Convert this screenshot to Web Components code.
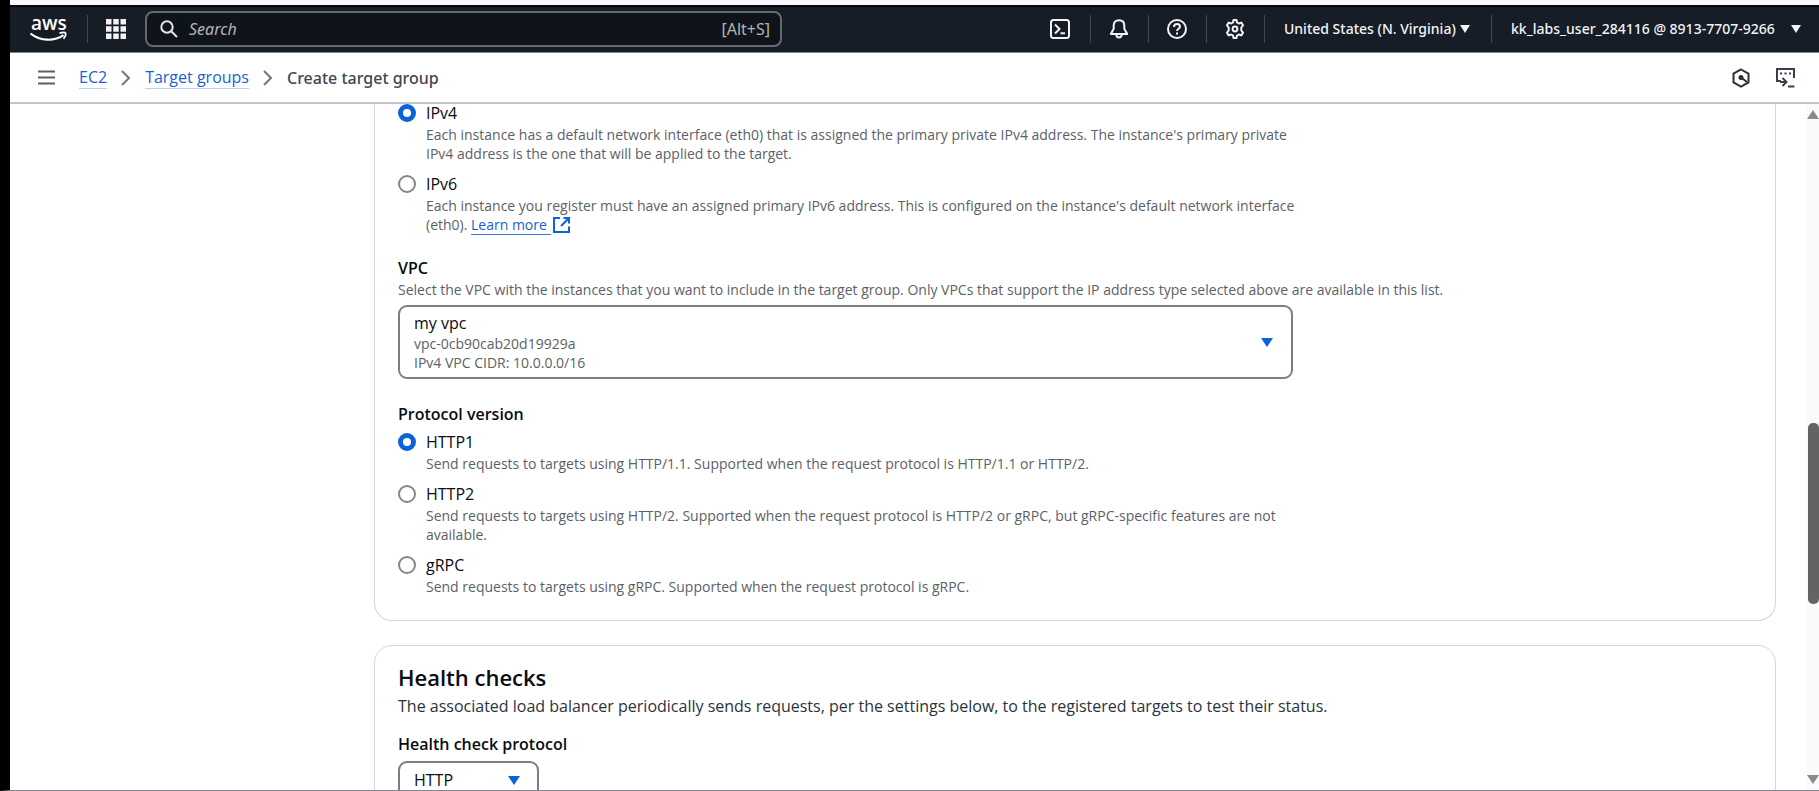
<!DOCTYPE html>
<html lang="en">
<head>
<meta charset="utf-8">
<title>Create target group | EC2</title>
<style>
  html, body { margin: 0; height: 100%; }
  body { font-family: "Open Sans", "Noto Sans", sans-serif; font-size: 16px; line-height: 24px; color: #0a0d12; background: #fff; overflow: hidden; }
</style>
</head>
<body>
<app-shell>
  <console-nav slot="nav"></console-nav>
  <crumb-bar slot="crumbs"></crumb-bar>
  <form-card class="first">
    <radio-group name="ip-type">
      <radio-option label="IPv4" checked>Each instance has a default network interface (eth0) that is assigned the primary private IPv4 address. The instance's primary private IPv4 address is the one that will be applied to the target.</radio-option>
      <radio-option label="IPv6">Each instance you register must have an assigned primary IPv6 address. This is configured on the instance's default network interface (eth0). <external-link href="#ipv6">Learn more</external-link></radio-option>
    </radio-group>
    <vpc-field></vpc-field>
    <radio-group name="protocol-version" heading="Protocol version">
      <radio-option label="HTTP1" checked>Send requests to targets using HTTP/1.1. Supported when the request protocol is HTTP/1.1 or HTTP/2.</radio-option>
      <radio-option label="HTTP2">Send requests to targets using HTTP/2. Supported when the request protocol is HTTP/2 or gRPC, but gRPC-specific features are not available.</radio-option>
      <radio-option label="gRPC">Send requests to targets using gRPC. Supported when the request protocol is gRPC.</radio-option>
    </radio-group>
  </form-card>
  <form-card heading="Health checks" description="The associated load balancer periodically sends requests, per the settings below, to the registered targets to test their status.">
    <protocol-field></protocol-field>
  </form-card>
  <scroll-rail slot="rail"></scroll-rail>
</app-shell>

<script>
const define = (name, html, setup) => {
  const t = document.createElement('template');
  t.innerHTML = html;
  customElements.define(name, class extends HTMLElement {
    connectedCallback() {
      if (this.shadowRoot) return;
      this.attachShadow({ mode: 'open' }).append(t.content.cloneNode(true));
      if (setup) setup(this, this.shadowRoot);
    }
  });
};

define('app-shell', `
<style>
  :host { display: flex; flex-direction: column; height: 100vh; box-sizing: border-box; border-left: 10px solid #000; border-bottom: 1px solid #85858b; }
  .strip { flex: none; height: 5px; background: #fbf5fd; }
  .body { flex: 1; min-height: 0; display: flex; }
  main { flex: 1; min-width: 0; overflow: hidden; display: flex; flex-direction: column; gap: 24px; padding: 0 31px 0 364px; }
  ::slotted(form-card) { flex: none; }
</style>
<div class="strip"></div>
<slot name="nav"></slot>
<slot name="crumbs"></slot>
<div class="body"><main><slot></slot></main><slot name="rail"></slot></div>`);

define('console-nav', `
<style>
  :host { display: block; color: #f3f3f7; }
  header { display: flex; align-items: center; height: 48px; box-sizing: border-box; padding-bottom: 2px; background: #161d26; border-top: 2px solid #05080d; border-bottom: 1px solid #80858e; font-family: "Noto Sans", sans-serif; font-size: 14px; font-weight: 500; }
  button, a { all: unset; box-sizing: border-box; cursor: pointer; display: flex; align-items: center; }
  svg { display: block; flex: none; }
  .logo { width: 77px; padding-left: 19px; font-family: "Open Sans", sans-serif; }
  .apps { width: 58px; height: 28px; justify-content: center; border-left: 1px solid #424650; padding-right: 2px; }
  .search { display: flex; align-items: center; flex: 0 1 637px; height: 36px; box-sizing: border-box; border: 2px solid #656871; border-radius: 8px; background: #0f141a; padding: 0 10px 0 13px; gap: 11px; font-weight: 400; color: #b4b4bb; }
  .search input { all: unset; flex: 1; min-width: 0; font-size: 16px; }
  .search input::placeholder { color: #b4b4bb; font-style: italic; opacity: 1; }
  .search span { font-size: 16px; }
  .right { margin-left: auto; display: flex; align-items: center; }
  .cell { height: 28px; width: 58px; justify-content: center; border-left: 1px solid #424650; padding-right: 2px; }
  .cell.plain { border-left: 0; }
  .cell.region, .cell.user { justify-content: space-between; padding-left: 19px; white-space: nowrap; }
  .cell.region { width: 227px; padding-right: 21px; }
  .cell.user { width: 328px; padding-right: 18px; }
</style>
<header>
  <a class="logo" href="#home" aria-label="aws home">
    <svg width="40" height="44" viewBox="0 -8 40 44" fill="none" stroke="#fff">
      <text x="2" y="15" font-size="19" font-weight="600" fill="#fff" stroke="none">aws</text>
      <path d="M1.500 18.500c10 8 24 8 33 1.700" stroke-width="2.200"/>
      <path d="M30.500 18.200c3-1 5.500-.9 6 0s-.3 3.300-2 5.500" stroke-width="1.800"/>
    </svg>
  </a>
  <button class="apps" aria-label="Services">
    <svg width="20" height="20" fill="#f3f3f7"><path d="M0 0h5.500v5.500H0zM7.250 0h5.500v5.500h-5.500zM14.500 0H20v5.500h-5.500zM0 7.250h5.500v5.500H0zM7.250 7.250h5.500v5.500h-5.500zM14.500 7.250H20v5.500h-5.500zM0 14.500h5.500V20H0zM7.250 14.500h5.500V20h-5.500zM14.500 14.500H20V20h-5.500z"/></svg>
  </button>
  <label class="search">
    <svg width="18" height="18" viewBox="0 0 18 18" fill="none" stroke="#e4e4ea" stroke-width="2"><circle cx="7" cy="7" r="5.700"/><path d="M11.200 11.200 17 17"/></svg>
    <input type="search" aria-label="Search" placeholder="Search"><span>[Alt+S]</span>
  </label>
  <div class="right">
    <button class="cell plain" aria-label="CloudShell"><svg width="20" height="20" viewBox="0 0 20 20" fill="none" stroke="#f3f3f7" stroke-width="2"><rect x="1" y="1" width="18" height="18" rx="2.500"/><path d="m5 5.500 4.500 4.500L5 14.500M10.500 14.200H15"/></svg></button>
    <button class="cell" aria-label="Notifications"><svg width="20" height="20" viewBox="0 0 20 20" fill="none" stroke="#f3f3f7" stroke-width="2" stroke-linejoin="round"><path d="M10 1.200c-3.600 0-5.300 2.400-5.300 5.300v3.300L1.800 15h16.400l-2.900-5.200V6.500c0-2.900-1.700-5.300-5.300-5.300z"/><path d="M7.200 15.500c.2 2 1.300 3 2.800 3s2.600-1 2.800-3"/></svg></button>
    <button class="cell" aria-label="Help"><svg width="20" height="20" viewBox="0 0 20 20" fill="none" stroke="#f3f3f7" stroke-width="2"><circle cx="10" cy="10" r="9"/><path d="M7 8c0-1.900 1.300-3 3-3s3 1.100 3 2.700c0 2.100-3 2.100-3 4.300M10 13.400v2"/></svg></button>
    <button class="cell" aria-label="Settings"><svg width="20" height="20" viewBox="0 0 20 20" fill="none" stroke="#f3f3f7" stroke-width="2" stroke-linejoin="round"><path d="M8 3.500 8.500 1h3l.5 2.500 1.800 1 2.500-.9 1.700 2.700L16.300 8.500v3L18 13.700l-1.700 2.700-2.500-.9-1.800 1-.5 2.500h-3L8 16.500l-1.800-1-2.500.9L2 13.700l1.700-2.200v-3L2 6.300l1.700-2.700 2.500.9z"/><circle cx="10" cy="10" r="2.400"/></svg></button>
    <button class="cell region">United States (N. Virginia)<svg width="10" height="8" fill="#f3f3f7"><path d="M0 0h10L5 8z"/></svg></button>
    <button class="cell user">kk_labs_user_284116 @ 8913-7707-9266<svg width="10" height="8" fill="#f3f3f7"><path d="M0 0h10L5 8z"/></svg></button>
  </div>
</header>`);

define('crumb-bar', `
<style>
  :host { display: block; }
  div { display: flex; align-items: center; height: 51px; box-sizing: border-box; border-bottom: 2px solid #c6c6c9; padding: 0 24px 0 28px; }
  button { all: unset; cursor: pointer; }
  svg { display: block; }
  nav { margin-left: 24px; }
  ol { display: flex; align-items: center; gap: 14px; list-style: none; margin: 0; padding: 0; }
  a { display: block; color: #1a5fd0; text-decoration: none; line-height: 22px; border-bottom: 1px solid #c0d0f4; }
  .here { color: #424650; font-family: "Noto Sans", sans-serif; font-weight: 500; }
  .tools { margin-left: auto; border: 0; height: auto; padding: 0; gap: 25px; }
</style>
<div>
  <button aria-label="Open navigation"><svg width="17" height="15" stroke="#5f5f66" stroke-width="2"><path d="M0 1.500h17M0 7.500h17M0 13.500h17"/></svg></button>
  <nav aria-label="Breadcrumbs"><ol>
    <li><a href="#ec2">EC2</a></li>
    <li aria-hidden="true"><svg width="10" height="16" fill="none" stroke="#75757d" stroke-width="2"><path d="m1 1 7 7-7 7"/></svg></li>
    <li><a href="#target-groups">Target groups</a></li>
    <li aria-hidden="true"><svg width="10" height="16" fill="none" stroke="#75757d" stroke-width="2"><path d="m1 1 7 7-7 7"/></svg></li>
    <li class="here" aria-current="page">Create target group</li>
  </ol></nav>
  <div class="tools">
    <button aria-label="Amazon Q"><svg width="18" height="20" viewBox="0 0 18 20" fill="none" stroke="#2b3038" stroke-width="2"><path d="m9 1.500 7.500 4.200v8.600L9 18.500l-7.500-4.200V5.700z"/><path d="m9 9.500 6 4.500"/><circle cx="9" cy="9.500" r="1.500" fill="#2b3038"/></svg></button>
    <button aria-label="Tutorials"><svg width="20" height="20" viewBox="0 0 20 20" fill="none" stroke="#3b3f48" stroke-width="2"><path d="M6 13H2V1h17v9M5 14h6M7.500 10l4 4-4 4M13 18.500h6.500"/><path d="M5 5.500h2M9.500 5.500h2M14 5.500h2"/></svg></button>
  </div>
</div>`);

define('form-card', `
<style>
  :host { display: block; border: 1px solid #d6d6da; border-radius: 18px; padding: 17px 23px 23px; }
  :host(.first) { border-top: 0; border-radius: 0 0 18px 18px; padding-top: 0; padding-bottom: 24px; margin-top: -2px; }
  h2 { margin: 0 0 3px; font-size: 22px; line-height: 28px; font-weight: 600; }
  p { margin: 0 0 14px; color: #2b3340; }
  [hidden] { display: none; }
</style>
<h2></h2><p></p><slot></slot>`, (el, root) => {
  for (const [sel, attr] of [['h2', 'heading'], ['p', 'description']]) {
    const n = root.querySelector(sel);
    n.textContent = el.getAttribute(attr) || '';
    n.hidden = !n.textContent;
  }
});

define('radio-group', `
<style>
  :host { display: block; max-width: 908px; }
  fieldset { display: flex; flex-direction: column; gap: 10px; margin: 0; padding: 0; border: 0; min-width: 0; }
  legend { padding: 0; margin-bottom: 5px; font-weight: 600; }
  [hidden] { display: none; }
</style>
<fieldset><legend></legend><slot></slot></fieldset>`, (el, root) => {
  const legend = root.querySelector('legend');
  legend.textContent = el.getAttribute('heading') || '';
  legend.hidden = !legend.textContent;
  el.addEventListener('pick', e => {
    for (const o of el.querySelectorAll('radio-option'))
      if (o !== e.target) o.shadowRoot.querySelector('input').checked = false;
  });
});

define('radio-option', `
<style>
  :host { display: grid; grid-template-columns: 18px 1fr; column-gap: 10px; align-items: center; }
  input { appearance: none; width: 18px; height: 18px; margin: 0 0 2px; box-sizing: border-box; border: 2px solid #85858d; border-radius: 50%; background: #fff; }
  input:checked { border: 5px solid #0b63d8; }
  label { line-height: 23px; }
  p { grid-column: 2; margin: 0; font-size: 14px; line-height: 19px; color: #5c5f68; }
</style>
<input type="radio" id="r" aria-describedby="d"><label for="r"></label><p id="d"><slot></slot></p>`, (el, root) => {
  const input = root.querySelector('input');
  input.checked = el.hasAttribute('checked');
  root.querySelector('label').textContent = el.getAttribute('label');
  input.addEventListener('change', () => el.dispatchEvent(new CustomEvent('pick', { bubbles: true })));
});

define('external-link', `
<style>
  :host { display: inline-block; }
  a { display: flex; align-items: center; gap: 2px; height: 19px; color: #1a5fd0; text-decoration: none; }
  span { border-bottom: 1px solid #3d74d8; padding-right: 4px; margin-top: 1px; }
</style>
<a><span><slot></slot></span><svg width="17" height="16" viewBox="0 0 17 16" fill="none" stroke="#0b63d8" stroke-width="2"><path d="M7 1H1v14h15V9.500M10.500 1H16v5.500M16 1 8 9"/></svg></a>`, (el, root) => {
  root.querySelector('a').href = el.getAttribute('href');
});

const selectStyles = `
  label { display: block; font-weight: 600; }
  .box { display: grid; align-items: center; }
  .box > * { grid-area: 1 / 1; }
  select { appearance: none; width: 100%; box-sizing: border-box; margin: 0; font: inherit; color: #0a0d12; background: #fff; border: 2px solid #7d7d85; border-radius: 9px; padding: 0 14px; }
  svg { justify-self: end; pointer-events: none; }`;

define('vpc-field', `
<style>
  :host { display: block; margin: 22px 0 23px; }
  ${selectStyles}
  p { margin: 0 0 6px; font-size: 14px; line-height: 19px; color: #5c5f68; }
  .box { max-width: 895px; }
  select { height: 74px; padding-bottom: 39px; }
  .details { align-self: end; padding: 0 16px 7px; font-size: 14px; line-height: 19px; color: #5c5f68; pointer-events: none; }
  svg { margin-right: 20px; }
</style>
<label for="vpc">VPC</label>
<p id="hint">Select the VPC with the instances that you want to include in the target group. Only VPCs that support the IP address type selected above are available in this list.</p>
<div class="box">
  <select id="vpc" aria-describedby="hint details"><option>my vpc</option></select>
  <div class="details" id="details">vpc-0cb90cab20d19929a<br>IPv4 VPC CIDR: 10.0.0.0/16</div>
  <svg width="12" height="9" fill="#0b63d8"><path d="M0 0h12L6 9z"/></svg>
</div>`);

define('protocol-field', `
<style>
  :host { display: block; }
  ${selectStyles}
  label { margin-bottom: 5px; }
  .box { width: 141px; }
  select { height: 38px; }
  svg { margin-right: 19px; }
</style>
<label for="protocol">Health check protocol</label>
<div class="box">
  <select id="protocol"><option>HTTP</option><option>HTTPS</option></select>
  <svg width="12" height="9" fill="#0b63d8"><path d="M0 0h12L6 9z"/></svg>
</div>`);

define('scroll-rail', `
<style>
  :host { display: flex; flex-direction: column; align-items: flex-end; width: 12px; background: #fafafa; padding: 5px 0; box-sizing: border-box; }
  svg { flex: none; display: block; }
  .before { flex: 306; }
  .thumb { flex: 183; width: 11px; border-radius: 5px; background: #636363; }
  .after { flex: 172; }
</style>
<svg width="12" height="10" fill="#8a8a8a"><path d="M6 1l6 9H0z"/></svg>
<div class="before"></div><div class="thumb"></div><div class="after"></div>
<svg width="12" height="10" fill="#8a8a8a"><path d="M0 0h12L6 9z"/></svg>`);
</script>
</body>
</html>
